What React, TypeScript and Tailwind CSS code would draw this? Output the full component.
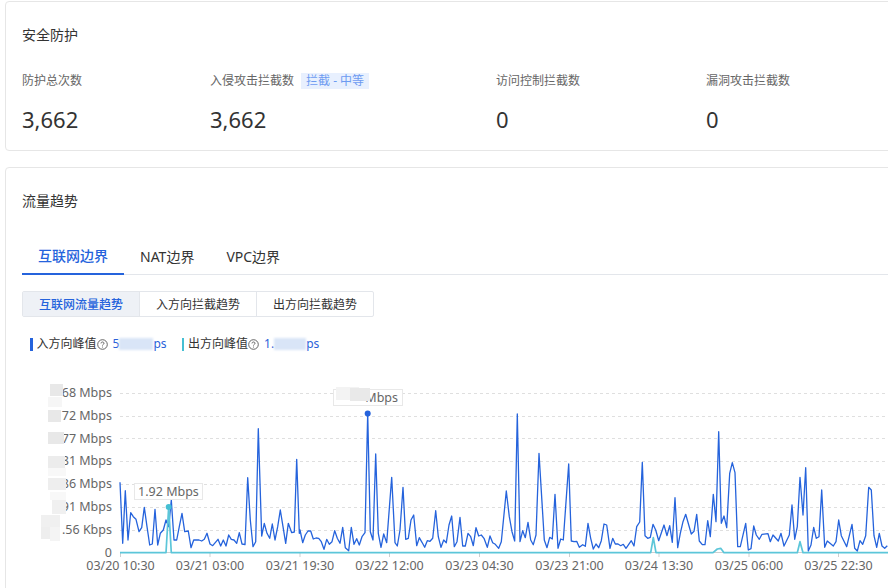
const zoomA: [number, number][] = [
  [360,337],[368,520],[376,362],[384,510],[392,428],[400,440],[408,448],[417,485],[425,473],[433,412],[441,470],[449,525],[457,522],[465,418],[473,525],[481,490],[490,480],[498,450],[506,470],[514,390],[522,510],[530,510],[538,470],[546,430],[554,485],[565,483],[573,533],[581,510],[597,510],[605,513],[613,508],[621,490],[630,522],[638,527],[654,508],[662,528],[670,510],[678,528],[686,495],[694,508],[702,510],[710,520],[718,488],[726,522],[735,524],[743,323],[751,450],[759,530],[767,515],[775,176],[785,498],[793,460],[801,490],[809,505],[817,462],[825,510],[833,470],[841,420],[849,470],[857,520],[865,460],[875,488],[883,486],[890,268],[898,490],
];
const zoomB: [number, number][] = [
  [0,480],[8,518],[16,495],[24,483],[32,483],[40,507],[48,504],[56,505],[64,515],[72,538],[80,508],[88,523],[96,515],[104,482],[112,505],[120,520],[128,472],[136,533],[146,542],[154,472],[162,523],[170,506],[178,525],[186,500],[195,488],[203,130],[211,485],[219,510],[227,252],[235,490],[243,532],[251,492],[260,518],[275,322],[285,518],[292,528],[300,480],[309,352],[317,508],[325,505],[333,450],[341,435],[350,527],[358,503],[366,517],[374,532],[382,512],[390,514],[398,505],[407,422],[415,500],[423,532],[431,510],[439,518],[447,465],[455,438],[463,530],[471,515],[480,442],[488,528],[496,528],[504,490],[512,500],[520,527],[528,473],[536,498],[544,495],[552,505],[562,532],[570,498],[578,518],[586,523],[596,535],[604,515],[619,363],[628,440],[636,485],[644,513],[652,132],[660,515],[668,482],[676,503],[684,457],[692,510],[700,524],[708,495],[717,250],[733,510],[741,533],[749,502],[757,507],[765,373],[774,535],[782,507],[790,510],[806,282],[814,513],[822,515],[830,514],[838,532],[848,524],[856,529],[864,460],[872,505],[880,537],[888,522],
];
const zoomC: [number, number][] = [
  [32,533],[40,512],[48,462],[56,465],[66,535],[74,505],[82,522],[90,522],[98,527],[106,523],[114,535],[130,512],[138,528],[146,470],[155,456],[163,277],[171,497],[179,505],[187,502],[195,463],[203,480],[212,512],[228,465],[237,497],[245,467],[253,517],[261,383],[269,533],[277,490],[285,455],[293,433],[310,492],[318,484],[326,433],[334,513],[343,524],[351,524],[359,452],[367,500],[376,373],[384,455],[392,185],[400,460],[408,438],[416,473],[425,310],[433,278],[441,308],[449,530],[457,530],[473,460],[481,540],[489,536],[497,468],[505,495],[514,508],[522,493],[540,491],[547,515],[555,495],[571,513],[579,490],[588,528],[604,495],[612,405],[620,508],[628,470],[636,322],[645,435],[653,293],[661,543],[669,525],[677,472],[685,505],[693,500],[701,360],[710,532],[718,513],[736,528],[744,515],[752,450],[760,497],[776,530],[792,463],[800,535],[808,543],[816,512],[824,523],[833,497],[842,352],[850,360],[858,497],[866,532],[874,490],[882,528],[890,535],[898,527],
];

const toPoints = (pts: [number, number][], x0: number) =>
  pts.map(([x, y]) => `${(x0 + x / 3).toFixed(1)},${(370 + y / 3).toFixed(1)}`).join(" ");

const inbound = [toPoints(zoomA, 0), toPoints(zoomB, 300), toPoints(zoomC, 588)].join(" ");
const outbound = [
  toPoints([[360,548],[498,548],[506,410],[514,548]], 0),
  toPoints([[188,548],[196,503],[204,548],[375,548],[388,537],[398,535],[408,548],[628,548],[636,515],[645,548],[900,548]], 588),
].join(" ");

const grid = [393, 416, 438, 461, 484, 507, 530];
const yLabels: [number, string][] = [
  [392.5, "68 Mbps"], [415.5, "72 Mbps"], [438, "77 Mbps"], [460.5, "81 Mbps"],
  [483.5, "86 Mbps"], [506.5, "91 Mbps"], [529.5, ".56 Kbps"], [552, "0"],
];
const xLabels: [number, string][] = [
  [120.5, "03/20 10:30"], [210, "03/21 03:00"], [300, "03/21 19:30"], [389.5, "03/22 12:00"],
  [479.5, "03/23 04:30"], [569.5, "03/23 21:00"], [659, "03/24 13:30"], [749, "03/25 06:00"], [838.5, "03/25 22:30"],
];
// blurred-out leading digits of the y axis
const axisMask: [number, number, number, number, string][] = [
  [50, 384, 13, 12, "#e8e8e8"], [48, 397, 14, 10, "#f6f6f6"], [48, 410, 13, 12, "#e8e8e8"],
  [48, 432, 16, 12, "#e8e8e8"], [48, 456, 17, 12, "#ececec"], [48, 468, 18, 8, "#f8f8f8"],
  [48, 478, 18, 12, "#eeeeee"], [50, 492, 16, 8, "#f8f8f8"], [52, 500, 14, 14, "#f0f0f0"],
  [41, 515, 19, 12, "#f0f0f0"], [41, 527, 19, 12, "#eeeeee"], [50, 527, 10, 14, "#f4f4f4"],
];

const stats = [
  { label: "防护总次数", value: "3,662", width: "w-[188px]" },
  { label: "入侵攻击拦截数", value: "3,662", width: "w-[286px]", tag: "拦截 - 中等" },
  { label: "访问控制拦截数", value: "0", width: "w-[210px]" },
  { label: "漏洞攻击拦截数", value: "0", width: "w-[180px]" },
];

function Help() {
  return (
    <svg className="mt-px shrink-0" width="11" height="11" viewBox="0 0 11 11" fill="none" stroke="#555" strokeWidth="0.9">
      <circle cx="5.5" cy="5.5" r="4.8" />
      <path d="M4 4.4c0-.9.7-1.4 1.5-1.4s1.5.5 1.5 1.3c0 1.1-1.5 1.1-1.5 2.2" />
      <path d="M5.5 7.6v.9" />
    </svg>
  );
}

function Peak({ label, color, head, tail, mask }: { label: string; color: string; head: string; tail: string; mask: string }) {
  return (
    <div className="flex items-center">
      <span className={`mr-1 h-[13px] w-[2.5px] ${color}`} />
      <span className="text-[12px] text-[#333]">{label}</span>
      <Help />
      <span className="ml-[5px] flex items-center text-[12px] text-[#2a62d9]">
        {head}
        <span className={`inline-block h-[12px] bg-[#d9e5f7] blur-[1px] ${mask}`} />
        {tail}
      </span>
    </div>
  );
}

function Chart() {
  return (
    <svg className="mt-[22px] block" width="882" height="213" viewBox="6 375 882 213" fontFamily="'Noto Sans', 'Open Sans', sans-serif">
      {grid.map((y) => (
        <line key={y} x1="120" x2="888" y1={y + 0.5} y2={y + 0.5} stroke="#dfdfdf" strokeDasharray="3 3" />
      ))}
      <line x1="120" x2="888" y1="552.5" y2="552.5" stroke="#cfcfcf" />
      {xLabels.map(([x]) => (
        <line key={x} x1={x} x2={x} y1="552" y2="557" stroke="#cfcfcf" />
      ))}
      {yLabels.map(([y, t]) => (
        <text key={t} x="112" y={y + 4.5} textAnchor="end" fontSize="12.5" fill="#666">{t}</text>
      ))}
      {xLabels.map(([x, t]) => (
        <text key={t} x={x} y="570" textAnchor="middle" fontSize="12.5" fill="#666">{t}</text>
      ))}
      {axisMask.map(([x, y, w, h, c]) => (
        <rect key={`${x}-${y}`} x={x} y={y} width={w} height={h} fill={c} />
      ))}
      <polyline points={inbound} fill="none" stroke="#2563dc" strokeWidth="1.3" strokeLinejoin="round" />
      <polyline points={outbound} fill="none" stroke="#5cc6d9" strokeWidth="1.7" strokeLinejoin="round" />
      <circle cx="367.7" cy="413.5" r="3" fill="#2563dc" />
      <circle cx="168.7" cy="507" r="3" fill="#45bfd3" />
      <rect x="134.5" y="483.5" width="68" height="16" fill="#fff" stroke="#e8e8e8" />
      <text x="168.5" y="495.5" textAnchor="middle" fontSize="12.5" fill="#666">1.92 Mbps</text>
      <rect x="333.5" y="389.5" width="69" height="16" fill="#fff" stroke="#e8e8e8" />
      <text x="398" y="401.5" textAnchor="end" fontSize="12.5" fill="#666">Mbps</text>
      <rect x="336" y="387" width="23" height="13" fill="#f3f3f3" />
      <rect x="350" y="388" width="20" height="13" fill="#e9e9e9" />
    </svg>
  );
}

export default function App() {
  return (
    <div
      className="h-[588px] w-[888px] overflow-hidden bg-white pl-[5px] pt-px"
      style={{ fontFamily: "'Noto Sans', 'Noto Sans CJK SC', sans-serif" }}
    >
      <div className="h-[150px] w-[900px] rounded-[4px] border border-[#e6e6e6] pl-4">
        <h2 className="pt-[23px] text-[14px] leading-[20px] text-[#333]">安全防护</h2>
        <div className="mt-[28px] flex">
          {stats.map((s) => (
            <div key={s.label} className={s.width}>
              <div className="flex h-4 items-center text-[12px] text-[#666]">
                {s.label}
                {s.tag && <span className="ml-[7px] bg-[#e8f0fe] px-[5px] text-[12px] leading-4 text-[#6d9bf1]">{s.tag}</span>}
              </div>
              <div className="mt-[14px] text-[22px] leading-[32px] text-[#333]">{s.value}</div>
            </div>
          ))}
        </div>
      </div>

      <div className="mt-4 h-[500px] w-[900px] rounded-[4px] border border-[#e6e6e6]">
        <div className="pl-4">
          <h2 className="pt-[23px] text-[14px] leading-[20px] text-[#333]">流量趋势</h2>
          <div className="mt-[24px] flex h-[40px] w-[866px] border-b border-[#e3e6eb] text-[14px]">
            <div className="flex h-[40px] w-[102px] items-center justify-center border-b-2 border-[#2563dc] pt-[3px] font-medium text-[#2563dc]">互联网边界</div>
            <div className="flex h-[39px] items-center pl-4 pt-[3px] text-[#333]">NAT边界</div>
            <div className="flex h-[39px] items-center pl-[32px] pt-[3px] text-[#333]">VPC边界</div>
          </div>
          <div className="mt-4 flex h-[26px] w-[352px] rounded-[2px] border border-[#e3e6eb] text-[12px]">
            <div className="flex w-[117px] items-center justify-center border-r border-[#e3e6eb] bg-[#eef1f6] pt-px font-medium text-[#2563dc]">互联网流量趋势</div>
            <div className="flex w-[117px] items-center justify-center border-r border-[#e3e6eb] pt-px text-[#333]">入方向拦截趋势</div>
            <div className="flex flex-1 items-center justify-center pt-px text-[#333]">出方向拦截趋势</div>
          </div>
          <div className="mt-[18px] flex h-[18px] items-center gap-[15px] pl-2">
            <Peak label="入方向峰值" color="bg-[#2563dc]" head="5" tail="ps" mask="w-[34px]" />
            <Peak label="出方向峰值" color="bg-[#45bfd3]" head="1." tail="ps" mask="w-[32px]" />
          </div>
        </div>
        <Chart />
      </div>
    </div>
  );
}
